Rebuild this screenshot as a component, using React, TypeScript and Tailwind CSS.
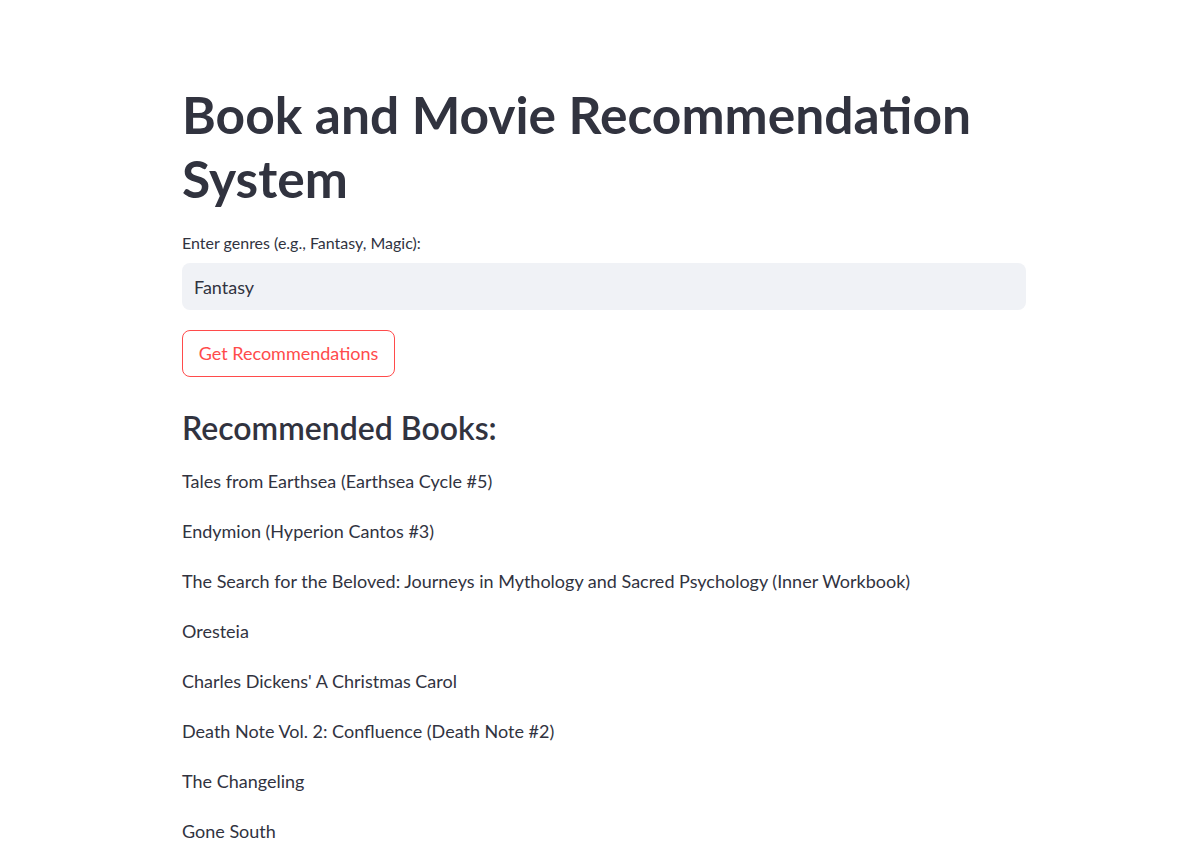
import { useState } from "react";

const books = [
  "Tales from Earthsea (Earthsea Cycle #5)",
  "Endymion (Hyperion Cantos #3)",
  "The Search for the Beloved: Journeys in Mythology and Sacred Psychology (Inner Workbook)",
  "Oresteia",
  "Charles Dickens' A Christmas Carol",
  "Death Note Vol. 2: Confluence (Death Note #2)",
  "The Changeling",
  "Gone South",
];

export default function App() {
  const [genres, setGenres] = useState("Fantasy");

  return (
    <div className="min-h-screen bg-white text-[#31333F] font-['Lato','Noto_Sans',sans-serif]">
      <div className="ml-[182px] w-[844px] pt-[82px]">
        <h1 className="text-[51.5px] font-bold leading-[64px]">
          Book and Movie Recommendation System
        </h1>

        <label className="block mt-[23px] text-[16px] leading-[20px]">
          Enter genres (e.g., Fantasy, Magic):
        </label>
        <input
          value={genres}
          onChange={(e) => setGenres(e.target.value)}
          className="mt-[10px] block w-full h-[47px] rounded-lg bg-[#F0F2F6] px-3 text-[18px] text-[#31333F] outline-none"
        />

        <button className="mt-[20px] h-[47px] w-[213px] rounded-lg border border-[#FF4B4B] bg-white text-[18px] text-[#FF4B4B]">
          Get Recommendations
        </button>

        <h3 className="mt-[30px] text-[32px] font-semibold leading-[42px]">Recommended Books:</h3>

        <div className="mt-[19px]">
          {books.map((b) => (
            <p key={b} className="text-[18px] leading-[26px] mb-[24px]">
              {b}
            </p>
          ))}
        </div>
      </div>
    </div>
  );
}
